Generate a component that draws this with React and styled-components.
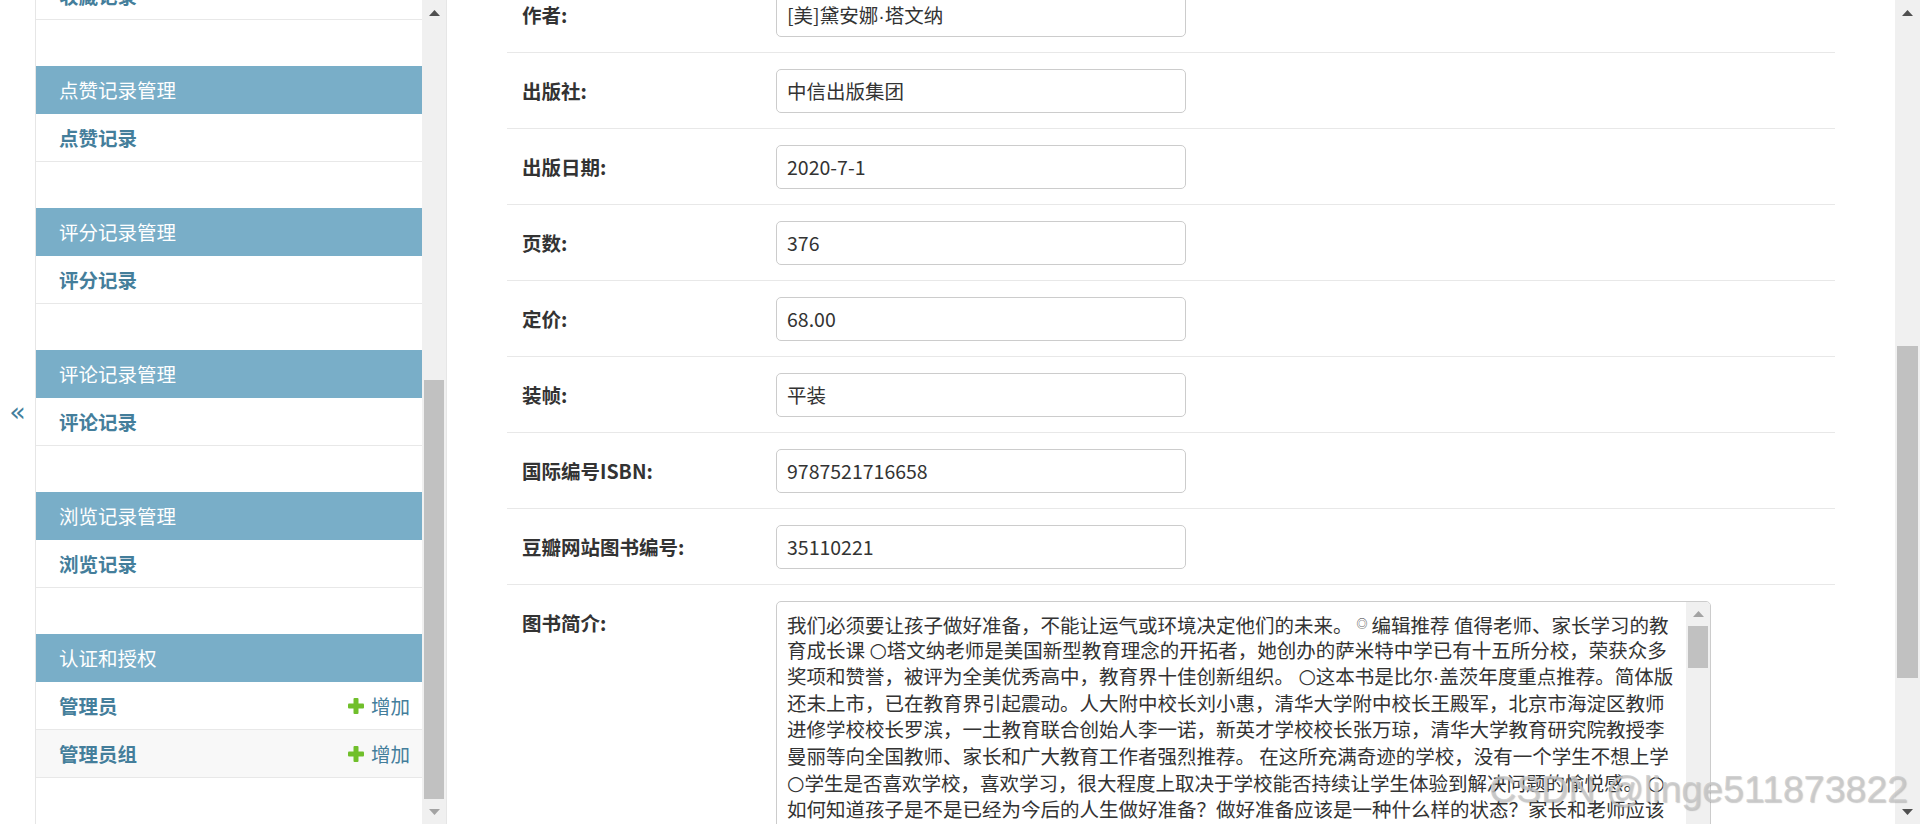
import React from "react"
import styled, { createGlobalStyle } from "styled-components"

const GlobalStyle = createGlobalStyle`
  html, body {
    margin: 0;
    padding: 0;
    overflow: hidden;
    background: #fff;
  }
  body {
    font-family: "Noto Sans CJK SC", "Noto Sans", sans-serif;
    color: #333;
  }
  * {
    box-sizing: border-box;
  }
`

const FONT = `"Noto Sans CJK SC", "Noto Sans", sans-serif`

const Page = styled.div`
  position: relative;
  display: flex;
  width: 1920px;
  height: 824px;
  overflow: hidden;
  font-family: ${FONT};
  font-size: 19.5px;
`

const Toggle = styled.div`
  width: 35px;
  flex: none;
  display: flex;
  align-items: center;
  justify-content: center;
  color: #447e9b;
  font-size: 27px;
  line-height: 1;
  padding-bottom: 2px;
  font-family: "DejaVu Sans", sans-serif;
`

const Sidebar = styled.nav`
  flex: none;
  width: 412px;
  display: flex;
  border-left: 1px solid #e6e6e6;
  border-right: 1px solid #e6e6e6;
`

const SideContent = styled.div`
  flex: 1;
  overflow: hidden;
`

const SideInner = styled.div`
  margin-top: -76px;
`

const Module = styled.div`
  margin-bottom: 46px;
`

const Caption = styled.div`
  height: 48px;
  line-height: 48px;
  padding-left: 23px;
  background: #79aec8;
  color: #fff;
  font-size: 19.5px;
  white-space: nowrap;
`

const ItemRow = styled.div`
  height: 48px;
  display: flex;
  align-items: center;
  justify-content: space-between;
  padding: 0 12px 0 23px;
  border-bottom: 1px solid #e8e8e8;
  background: ${p => (p.$alt ? "#f8f8f8" : "#fff")};
`

const ItemLink = styled.span`
  color: #447e9b;
  font-weight: 700;
  font-size: 19.5px;
`

const AddLink = styled.span`
  display: flex;
  align-items: center;
  gap: 7px;
  color: #447e9b;
  font-size: 19.5px;
`

const Track = styled.div`
  flex: none;
  width: ${p => p.$width || 24}px;
  background: #f0f0f0;
  display: flex;
  flex-direction: column;
`

const ArrowBox = styled.div`
  height: ${p => p.$size || 25}px;
  flex: none;
  display: flex;
  align-items: center;
  justify-content: center;
`

const Rail = styled.div`
  flex: 1;
  padding: 0 2px;
`

const Thumb = styled.div`
  background: #c1c1c1;
  width: 100%;
`

const Main = styled.main`
  flex: 1;
  overflow: hidden;
  padding: 0 60px;
`

const Form = styled.div`
  margin-top: -23px;
`

const FormRow = styled.div`
  display: flex;
  align-items: flex-start;
  padding: 16px 0 15px;
  border-bottom: 1px solid #e8e8e8;
`

const Label = styled.label`
  width: 269px;
  flex: none;
  padding-left: 15px;
  line-height: 44px;
  font-weight: 700;
  color: #333;
  white-space: nowrap;
`

const Input = styled.div`
  width: 410px;
  height: 44px;
  border: 1px solid #ccc;
  border-radius: 5px;
  padding: 0 10px;
  line-height: 42px;
  color: #333;
  white-space: nowrap;
  overflow: hidden;
`

const TextBox = styled.div`
  width: 935px;
  height: 330px;
  border: 1px solid #ccc;
  border-radius: 5px;
  display: flex;
  overflow: hidden;
`

const TextBody = styled.div`
  flex: 1;
  padding: 8px 0 0 10px;
  overflow: hidden;
`

const TextLine = styled.div`
  height: 26.6px;
  line-height: 26.6px;
  white-space: nowrap;
  color: #333;
`

const SmallMark = styled.span`
  font-size: 11px;
  vertical-align: 5px;
  margin: 0 4px;
`

const Circle = styled.span`
  font-family: "DejaVu Sans", sans-serif;
  font-size: 20px;
  vertical-align: 1px;
`

const Dot = styled.span`
  font-family: "Liberation Sans", Arial, sans-serif;
`

const Watermark = styled.div`
  position: absolute;
  left: 1489px;
  top: 771px;
  font-family: "Liberation Sans", Arial, sans-serif;
  font-size: 37.5px;
  line-height: 1;
  color: rgba(200, 200, 200, 0.8);
  text-shadow: 1px 1px 1px rgba(110, 110, 110, 0.35);
  white-space: nowrap;
  pointer-events: none;
`

function Arrow({ dir, color }) {
  return (
    <svg width="11" height="6" viewBox="0 0 11 6">
      {dir === "up" ? (
        <polygon points="0,6 5.5,0 11,6" fill={color} />
      ) : (
        <polygon points="0,0 5.5,6 11,0" fill={color} />
      )}
    </svg>
  )
}

function ScrollBar({ width, arrow, thumbTop, thumbHeight, upColor, downColor }) {
  return (
    <Track $width={width}>
      <ArrowBox $size={arrow}>
        <Arrow dir="up" color={upColor} />
      </ArrowBox>
      <Rail>
        <Thumb style={{ marginTop: thumbTop, height: thumbHeight }} />
      </Rail>
      <ArrowBox $size={arrow}>
        <Arrow dir="down" color={downColor} />
      </ArrowBox>
    </Track>
  )
}

function PlusIcon() {
  return (
    <svg width="16" height="16" viewBox="0 0 16 16">
      <rect x="5.5" y="0" width="5" height="16" rx="1" fill="#70bf2b" />
      <rect x="0" y="5.5" width="16" height="5" rx="1" fill="#70bf2b" />
    </svg>
  )
}

const modules = [
  { caption: "收藏记录管理", rows: [{ name: "收藏记录" }] },
  { caption: "点赞记录管理", rows: [{ name: "点赞记录" }] },
  { caption: "评分记录管理", rows: [{ name: "评分记录" }] },
  { caption: "评论记录管理", rows: [{ name: "评论记录" }] },
  { caption: "浏览记录管理", rows: [{ name: "浏览记录" }] },
  {
    caption: "认证和授权",
    rows: [
      { name: "管理员", add: true },
      { name: "管理员组", add: true },
    ],
  },
]

const fields = [
  ["作者:", <>[美]黛安娜<Dot>·</Dot>塔文纳</>],
  ["出版社:", "中信出版集团"],
  ["出版日期:", "2020-7-1"],
  ["页数:", "376"],
  ["定价:", "68.00"],
  ["装帧:", "平装"],
  ["国际编号ISBN:", "9787521716658"],
  ["豆瓣网站图书编号:", "35110221"],
]

const O = () => <Circle>○</Circle>

const summary = [
  <>
    我们必须要让孩子做好准备，不能让运气或环境决定他们的未来。<SmallMark>◎</SmallMark>编辑推荐 值得老师、家长学习的教
  </>,
  <>育成长课 <O />塔文纳老师是美国新型教育理念的开拓者，她创办的萨米特中学已有十五所分校，荣获众多</>,
  <>奖项和赞誉，被评为全美优秀高中，教育界十佳创新组织。 <O />这本书是比尔<Dot>·</Dot>盖茨年度重点推荐。简体版</>,
  "还未上市，已在教育界引起震动。人大附中校长刘小惠，清华大学附中校长王殿军，北京市海淀区教师",
  "进修学校校长罗滨，一土教育联合创始人李一诺，新英才学校校长张万琼，清华大学教育研究院教授李",
  "曼丽等向全国教师、家长和广大教育工作者强烈推荐。 在这所充满奇迹的学校，没有一个学生不想上学",
  <><O />学生是否喜欢学校，喜欢学习，很大程度上取决于学校能否持续让学生体验到解决问题的愉悦感。 <O /></>,
  "如何知道孩子是不是已经为今后的人生做好准备？做好准备应该是一种什么样的状态？家长和老师应该",
  <>做些什么？ <O />一个成功的人生，由什么决定？答案是，一个孩子需要具备自主学习的能力，学会合作，</>,
]

export default function App() {
  return (
    <>
      <GlobalStyle />
      <Page>
        <Toggle>«</Toggle>
        <Sidebar>
          <SideContent>
            <SideInner>
              {modules.map(m => (
                <Module key={m.caption}>
                  <Caption>{m.caption}</Caption>
                  {m.rows.map((r, i) => (
                    <ItemRow key={r.name} $alt={i % 2 === 1}>
                      <ItemLink>{r.name}</ItemLink>
                      {r.add ? (
                        <AddLink>
                          <PlusIcon />
                          增加
                        </AddLink>
                      ) : null}
                    </ItemRow>
                  ))}
                </Module>
              ))}
            </SideInner>
          </SideContent>
          <ScrollBar
            width={24}
            arrow={25}
            thumbTop={355}
            thumbHeight={419}
            upColor="#505050"
            downColor="#a3a3a3"
          />
        </Sidebar>
        <Main>
          <Form>
            {fields.map(([label, value]) => (
              <FormRow key={label}>
                <Label>{label}</Label>
                <Input>{value}</Input>
              </FormRow>
            ))}
            <FormRow>
              <Label>图书简介:</Label>
              <TextBox>
                <TextBody>
                  {summary.map((line, i) => (
                    <TextLine key={i}>{line}</TextLine>
                  ))}
                </TextBody>
                <ScrollBar
                  width={24}
                  arrow={24}
                  thumbTop={0}
                  thumbHeight={42}
                  upColor="#a3a3a3"
                  downColor="#505050"
                />
              </TextBox>
            </FormRow>
          </Form>
        </Main>
        <ScrollBar
          width={25}
          arrow={25}
          thumbTop={321}
          thumbHeight={332}
          upColor="#505050"
          downColor="#505050"
        />
        <Watermark>CSDN @linge511873822</Watermark>
      </Page>
    </>
  )
}
